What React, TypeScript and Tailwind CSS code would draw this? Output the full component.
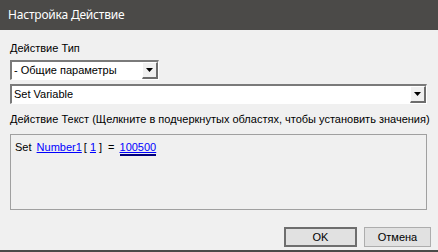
import React from "react";

function Arrow() {
  return (
    <svg width="7" height="4" viewBox="0 0 7 4">
      <polygon points="0,0 7,0 3.5,4" fill="#000" />
    </svg>
  );
}

function Combo({ width, text }: { width: string; text: string }) {
  return (
    <div className={`${width} h-[20px] flex border-t-2 border-l-2 border-t-[#7a7a7a] border-l-[#7a7a7a] border-b border-r border-b-white border-r-white bg-white`}>
      <div className="flex-1 flex items-center pl-[2px] text-[11px] text-black leading-none">{text}</div>
      <div className="w-[16px] h-full flex items-center justify-center bg-[#f0f0f0] border-t border-l border-t-white border-l-white border-b-2 border-r-2 border-b-[#6d6d6d] border-r-[#6d6d6d]">
        <Arrow />
      </div>
    </div>
  );
}

export default function App() {
  return (
    <div className="w-[438px] h-[252px] bg-[#f0f0f0] flex flex-col" style={{ fontFamily: '"Liberation Sans", Arial, sans-serif' }}>
      <div className="h-[30px] bg-[#4b4a48] flex items-center pl-[8px] text-white text-[12px] tracking-[-0.2px]" style={{ fontFamily: '"Noto Sans", sans-serif' }}>
        Настройка Действие
      </div>
      <div className="flex-1 flex flex-col px-[10px] pt-[12px] text-[11px] text-black">
        <div className="leading-[13px] h-[13px]">Действие Тип</div>
        <div className="mt-[5px]">
          <Combo width="w-[149px]" text="- Общие параметры" />
        </div>
        <div className="mt-[4px]">
          <Combo width="w-[417px]" text="Set Variable" />
        </div>
        <div className="mt-[9px] leading-[13px] h-[13px] whitespace-nowrap">
          Действие Текст (Щелкните в подчеркнутых областях, чтобы установить значения)
        </div>
        <div className="mt-[8px] w-[417px] h-[76px] border border-[#a0a0a0] pl-[4px] pt-[6px]">
          <div className="flex items-start leading-[13px] whitespace-pre">
            <span>Set </span>
            <span className="text-[#0000ff] underline ml-[2px]">Number1</span>
            <span className="ml-[2px]">[</span>
            <span className="text-[#0000ff] underline ml-[3px]">1</span>
            <span className="ml-[3px]">]</span>
            <span className="ml-[6px]">=</span>
            <span className="ml-[5px] text-[#0000ff] border-b-2 border-[#000080] flex flex-col">
              <span className="underline">100500</span>
            </span>
          </div>
        </div>
        <div className="mt-[17px] flex justify-end gap-[7px] mr-[-3px]">
          <div className="w-[73px] h-[20px] bg-[#e1e1e1] border-2 border-[#6e6e6e] flex items-center justify-center text-[11px]">OK</div>
          <div className="w-[67px] h-[20px] bg-[#e1e1e1] border border-[#adadad] flex items-center justify-center text-[11px]">Отмена</div>
        </div>
      </div>
      <div className="h-[2px] bg-[#4b4a48]" />
    </div>
  );
}
